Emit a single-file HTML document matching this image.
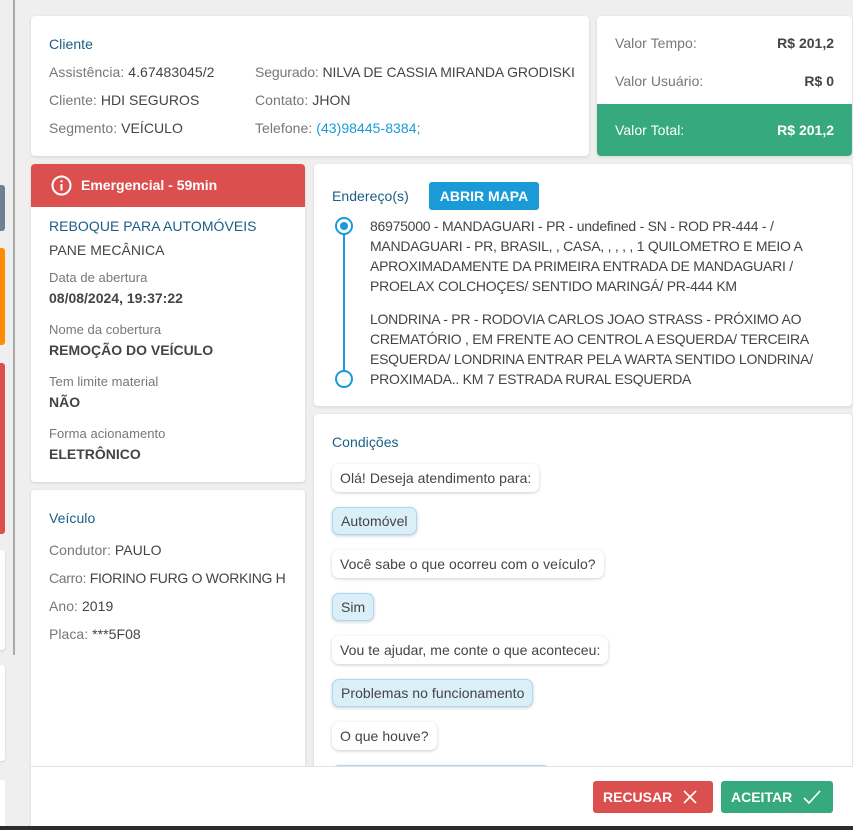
<!DOCTYPE html>
<html><head><meta charset="utf-8">
<style>
*{box-sizing:border-box;margin:0;padding:0}
body{width:853px;height:830px;background:#efefef;font-family:"Liberation Sans",sans-serif;font-size:14px;color:#444;position:relative;overflow:hidden;letter-spacing:0.05px}
.a{position:absolute}
.card{position:absolute;background:#fff;border-radius:4px;box-shadow:0 1px 3px rgba(0,0,0,.12)}
.t{position:absolute;white-space:nowrap}
.lbl{color:#777}
.h{color:#1b5e86;font-size:14px}
.b{font-weight:bold;letter-spacing:0}
.bub{position:absolute;left:18px;height:28px;line-height:28px;padding:0 8px;border-radius:7px;background:#fff;box-shadow:0 1px 3px rgba(0,0,0,.2);white-space:nowrap;color:#444}
.bub.c{background:#dbeff8;border:1px solid #a9daf0;line-height:26px}
</style></head><body>
<div class="a" style="left:13px;top:0;width:2px;height:655px;background:#aaa"></div>
<div class="a" style="left:0;top:185px;width:5px;height:46px;background:#6e8094;border-radius:0 3px 3px 0"></div>
<div class="a" style="left:0;top:248px;width:5px;height:97px;background:#ff8c00;border-radius:0 3px 3px 0"></div>
<div class="a" style="left:0;top:363px;width:5px;height:171px;background:#dc4f4f;border-radius:0 3px 3px 0"></div>
<div class="a" style="left:0;top:550px;width:5px;height:100px;background:#fff;border-radius:0 3px 3px 0;box-shadow:0 1px 2px rgba(0,0,0,.15)"></div>
<div class="a" style="left:0;top:665px;width:5px;height:96px;background:#fff;border-radius:0 3px 3px 0;box-shadow:0 1px 2px rgba(0,0,0,.15)"></div>
<div class="a" style="left:0;top:780px;width:5px;height:50px;background:#fff;border-radius:0 3px 3px 0"></div>

<div class="card" style="left:31px;top:16px;width:558px;height:140px">
 <div class="t h" style="left:18px;top:20px">Cliente</div>
 <div class="t" style="left:18px;top:48px"><span class="lbl">Assistência:</span> 4.67483045/2</div>
 <div class="t" style="left:18px;top:76px"><span class="lbl">Cliente:</span> HDI SEGUROS</div>
 <div class="t" style="left:18px;top:104px"><span class="lbl">Segmento:</span> VEÍCULO</div>
 <div class="t" style="left:224px;top:48px;letter-spacing:-0.1px"><span class="lbl">Segurado:</span> NILVA DE CASSIA MIRANDA GRODISKI</div>
 <div class="t" style="left:224px;top:76px"><span class="lbl">Contato:</span> JHON</div>
 <div class="t" style="left:224px;top:104px"><span class="lbl">Telefone:</span> <span style="color:#1a9ad6">(43)98445-8384;</span></div>
</div>

<div class="card" style="left:597px;top:16px;width:255px;height:140px;overflow:hidden">
 <div class="t lbl" style="left:18px;top:19px">Valor Tempo:</div>
 <div class="t b" style="right:18px;top:19px">R$ 201,2</div>
 <div class="t lbl" style="left:18px;top:57px">Valor Usuário:</div>
 <div class="t b" style="right:18px;top:57px">R$ 0</div>
 <div class="a" style="left:0;top:88px;width:255px;height:52px;background:#37a97f"></div>
 <div class="t" style="left:18px;top:106px;color:#fff">Valor Total:</div>
 <div class="t b" style="right:18px;top:106px;color:#fff">R$ 201,2</div>
</div>

<div class="card" style="left:31px;top:164px;width:274px;height:318px;overflow:hidden">
 <div class="a" style="left:0;top:0;width:274px;height:43px;background:#dc4f4f"></div>
 <svg class="a" style="left:20px;top:11px" width="21" height="21" viewBox="0 0 21 21"><circle cx="10.5" cy="10.5" r="9" fill="none" stroke="#fff" stroke-width="2"/><rect x="9.5" y="9" width="2" height="6.5" fill="#fff"/><circle cx="10.5" cy="6.3" r="1.2" fill="#fff"/></svg>
 <div class="t b" style="left:50px;top:13px;color:#fff;font-size:14px">Emergencial - 59min</div>
 <div class="t h" style="left:18px;top:54px">REBOQUE PARA AUTOMÓVEIS</div>
 <div class="t" style="left:18px;top:78px">PANE MECÂNICA</div>
 <div class="t lbl" style="left:18px;top:106px;font-size:13px">Data de abertura</div>
 <div class="t b" style="left:18px;top:126px">08/08/2024, 19:37:22</div>
 <div class="t lbl" style="left:18px;top:158px;font-size:13px">Nome da cobertura</div>
 <div class="t b" style="left:18px;top:178px">REMOÇÃO DO VEÍCULO</div>
 <div class="t lbl" style="left:18px;top:210px;font-size:13px">Tem limite material</div>
 <div class="t b" style="left:18px;top:230px">NÃO</div>
 <div class="t lbl" style="left:18px;top:262px;font-size:13px">Forma acionamento</div>
 <div class="t b" style="left:18px;top:282px">ELETRÔNICO</div>
</div>

<div class="card" style="left:31px;top:490px;width:274px;height:340px">
 <div class="t h" style="left:18px;top:20px">Veículo</div>
 <div class="t" style="left:18px;top:52px"><span class="lbl">Condutor:</span> PAULO</div>
 <div class="t" style="left:18px;top:80px;letter-spacing:-0.3px"><span class="lbl">Carro:</span> FIORINO FURG O WORKING H</div>
 <div class="t" style="left:18px;top:108px"><span class="lbl">Ano:</span> 2019</div>
 <div class="t" style="left:18px;top:136px"><span class="lbl">Placa:</span> ***5F08</div>
</div>

<div class="card" style="left:314px;top:164px;width:538px;height:242px">
 <div class="t h" style="left:18px;top:24px">Endereço(s)</div>
 <div class="a" style="left:115px;top:18px;width:110px;height:28px;background:#1a9ad6;border-radius:3px;color:#fff;font-weight:bold;text-align:center;line-height:28px;font-size:14px;letter-spacing:0">ABRIR MAPA</div>
 <div class="a" style="left:29px;top:70px;width:2px;height:144px;background:#1a9ad6"></div>
 <div class="a" style="left:21px;top:53px;width:18px;height:18px;border:2px solid #1a9ad6;border-radius:50%;background:#fff"></div>
 <div class="a" style="left:26px;top:58px;width:8px;height:8px;border-radius:50%;background:#1a9ad6"></div>
 <div class="a" style="left:21px;top:206px;width:18px;height:18px;border:2px solid #1a9ad6;border-radius:50%;background:#fff"></div>
 <div class="t" style="left:56px;top:52px;line-height:20px;font-size:14px;letter-spacing:-0.25px">86975000 - MANDAGUARI - PR - undefined - SN - ROD PR-444 - /<br>MANDAGUARI - PR, BRASIL, , CASA, , , , , 1 QUILOMETRO E MEIO A<br>APROXIMADAMENTE DA PRIMEIRA ENTRADA DE MANDAGUARI /<br>PROELAX COLCHOÇES/ SENTIDO MARINGÁ/ PR-444 KM</div>
 <div class="t" style="left:56px;top:145px;line-height:20px;font-size:14px;letter-spacing:-0.25px">LONDRINA - PR - RODOVIA CARLOS JOAO STRASS - PRÓXIMO AO<br>CREMATÓRIO , EM FRENTE AO CENTROL A ESQUERDA/ TERCEIRA<br>ESQUERDA/ LONDRINA ENTRAR PELA WARTA SENTIDO LONDRINA/<br>PROXIMADA.. KM 7 ESTRADA RURAL ESQUERDA</div>
</div>

<div class="card" style="left:314px;top:414px;width:538px;height:416px;overflow:hidden">
 <div class="t h" style="left:18px;top:20px">Condições</div>
 <div class="bub" style="top:50px">Olá! Deseja atendimento para:</div>
 <div class="bub c" style="top:93px">Automóvel</div>
 <div class="bub" style="top:136px">Você sabe o que ocorreu com o veículo?</div>
 <div class="bub c" style="top:179px">Sim</div>
 <div class="bub" style="top:222px">Vou te ajudar, me conte o que aconteceu:</div>
 <div class="bub c" style="top:265px">Problemas no funcionamento</div>
 <div class="bub" style="top:308px">O que houve?</div>
 <div class="bub c" style="top:351px;width:218px">&nbsp;</div>
</div>

<div class="a" style="left:31px;top:766px;width:822px;height:60px;background:#fff;border-top:1px solid #e3e3e3"></div>
<div class="a" style="left:593px;top:781px;width:120px;height:32px;background:#dc4f4f;border-radius:3px;color:#fff;font-weight:bold;line-height:32px;padding-left:10px;letter-spacing:0">RECUSAR
 <svg class="a" style="left:90px;top:9px" width="14" height="14" viewBox="0 0 14 14"><path d="M1 1L13 13M13 1L1 13" stroke="#fff" stroke-width="1.6"/></svg></div>
<div class="a" style="left:721px;top:781px;width:112px;height:32px;background:#37a97f;border-radius:3px;color:#fff;font-weight:bold;line-height:32px;padding-left:10px;letter-spacing:0">ACEITAR
 <svg class="a" style="left:82px;top:9px" width="18" height="14" viewBox="0 0 18 14"><path d="M1 8L6 13L17 1" fill="none" stroke="#fff" stroke-width="1.6"/></svg></div>
<div class="a" style="left:0;top:826px;width:853px;height:4px;background:#2b2d2b"></div>
</body></html>
